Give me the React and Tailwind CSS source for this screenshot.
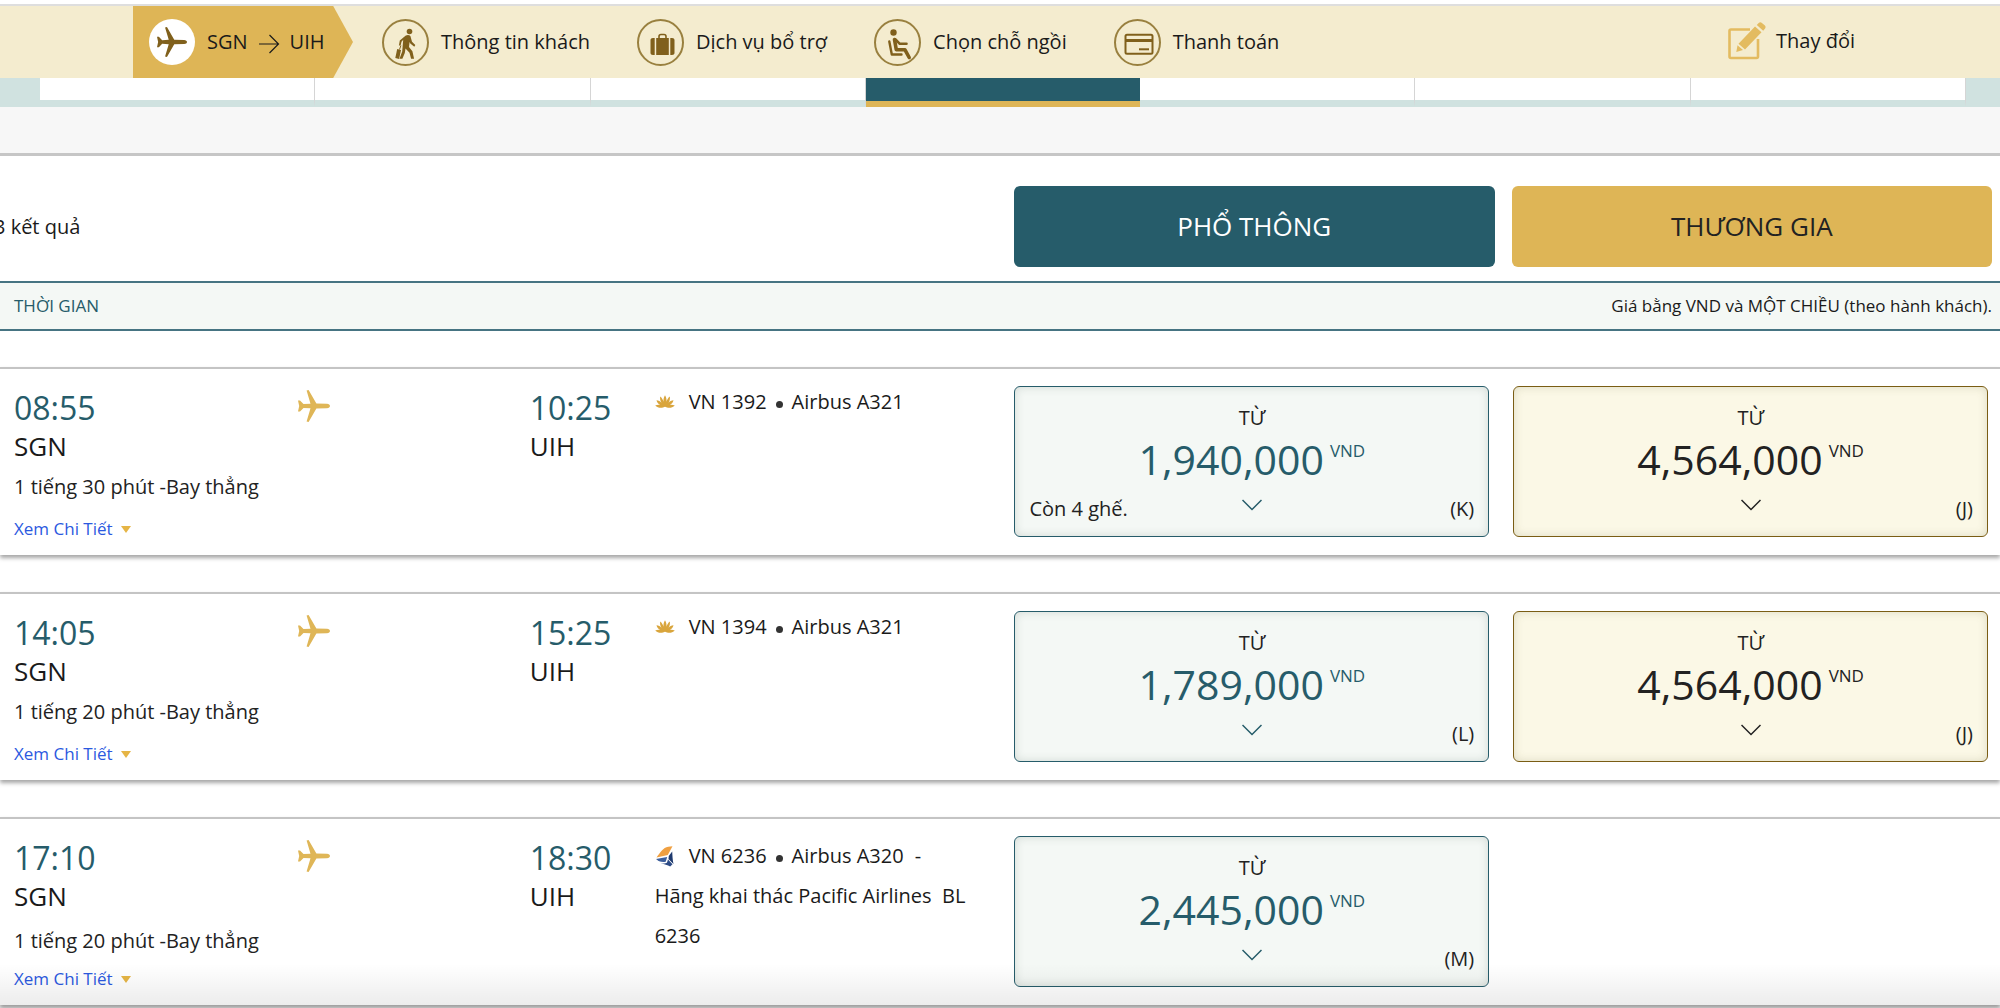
const steps = [
  { icon: WalkerIcon, label: 'Thông tin khách' },
  { icon: LuggageIcon, label: 'Dịch vụ bổ trợ' },
  { icon: SeatIcon, label: 'Chọn chỗ ngồi' },
  { icon: CardIcon, label: 'Thanh toán' },
];

const days = [0, 1, 2, 3, 4, 5, 6];
const activeDay = 3;

const flights = [
  {
    depart: '08:55',
    arrive: '10:25',
    duration: '1 tiếng 30 phút -Bay thẳng',
    number: 'VN 1392',
    aircraft: 'Airbus A321',
    economy: { price: '1,940,000', code: '(K)', seats: 'Còn 4 ghế.' },
    business: { price: '4,564,000', code: '(J)' },
  },
  {
    depart: '14:05',
    arrive: '15:25',
    duration: '1 tiếng 20 phút -Bay thẳng',
    number: 'VN 1394',
    aircraft: 'Airbus A321',
    economy: { price: '1,789,000', code: '(L)' },
    business: { price: '4,564,000', code: '(J)' },
  },
  {
    depart: '17:10',
    arrive: '18:30',
    duration: '1 tiếng 20 phút -Bay thẳng',
    number: 'VN 6236',
    aircraft: 'Airbus A320',
    operator: 'Hãng khai thác Pacific Airlines\u00a0 BL 6236',
    economy: { price: '2,445,000', code: '(M)' },
  },
];

function PlaneIcon({ className }) {
  return (
    <svg viewBox="0 0 32 32" className={className} fill="currentColor" aria-hidden="true">
      <path d="M0 10.5h2l3.5 3.6 7 -.4L8.6 0.6 10.6 0l7.8 13.6 10.6.2c1.8.1 3 1.1 3 2.2s-1.2 2.1-3 2.2l-10.6.2L10.6 32l-2-.6 3.9-13.1-7-.4L2 21.5H0L1.2 16z" />
    </svg>
  );
}

function WalkerIcon({ className }) {
  return (
    <svg viewBox="0 0 46 46" className={className} fill="none" stroke="currentColor" aria-hidden="true">
      <circle cx="25.5" cy="10.5" r="2.8" fill="currentColor" stroke="none" />
      <path d="M21.8 14.5c1.5-.9 3.6-.7 4.6.4l1.600 5.800 3.300 3.400-1 1.600-4-3.100-.7-1.500-.6 5 3.400 4.200 1.700 7.500h-3l-1.600-6-4-4.200-.7 4.500-2.400 5.700h-2.900l2.700-7.200 1-11.900-1.700 2.100-.9 3.800h-1.700l.9-5.100z" fill="currentColor" stroke="none" />
      <path d="M13.200 28l3.800 1-1.900 9-3.800-.9z" fill="currentColor" stroke="none" />
      <path d="M15.500 28.500l1.400-4" strokeWidth="1" />
    </svg>
  );
}

function LuggageIcon({ className }) {
  return (
    <svg viewBox="0 0 46 46" className={className} fill="currentColor" aria-hidden="true">
      <path d="M17.2 17h12.600v17H17.200zM15.700 17v17h-1.700c-1.500 0-2.500-.8-2.500-2V19c0-1.200 1-2 2.500-2zM31.300 17v17h1.700c1.500 0 2.500-.8 2.500-2V19c0-1.200-1-2-2.500-2z" />
      <path d="M20 17v-1.500c0-1.200.8-2 2-2h3c1.200 0 2 .8 2 2V17" fill="none" stroke="currentColor" strokeWidth="1.600" />
    </svg>
  );
}

function SeatIcon({ className }) {
  return (
    <svg viewBox="0 0 46 46" className={className} fill="none" stroke="currentColor" strokeLinecap="round" strokeLinejoin="round" aria-hidden="true">
      <circle cx="17.500" cy="11.500" r="3.200" fill="currentColor" stroke="none" />
      <path d="M13.300 20.500l2.500 13h9.700" strokeWidth="2.400" />
      <path d="M18.500 18.500l1.800 10.300h8.700l4.200 7.700" strokeWidth="3.600" />
      <path d="M19.500 18.500l4.300 4.300h6.700" strokeWidth="2.600" />
    </svg>
  );
}

function CardIcon({ className }) {
  return (
    <svg viewBox="0 0 46 46" className={className} fill="none" stroke="currentColor" aria-hidden="true">
      <rect x="9.500" y="13.800" width="27" height="19" rx="1.500" strokeWidth="2" />
      <path d="M9.500 19.500h27" strokeWidth="3" />
      <path d="M23 28.300h10" strokeWidth="2" />
    </svg>
  );
}

function EditIcon({ className }) {
  return (
    <svg viewBox="0 0 38 38" className={className} aria-hidden="true">
      <path d="M22 7.500H3A1.500 1.500 0 0 0 1.500 9v25.500A1.500 1.500 0 0 0 3 36h25.500a1.500 1.500 0 0 0 1.500-1.500V17" fill="none" stroke="currentColor" strokeWidth="2.600" />
      <path d="M27 4.500l6.500 5.800L17 27.500l-6.500-5.800zM9.500 23.200l5.500 4.900-6.700 1.800zM28.800 3l1.900-2c.9-1 2.300-1 3.200-.1l3 2.600c.9.9.9 2.300 0 3.200L35.200 8.800z" fill="currentColor" />
    </svg>
  );
}

function ArrowIcon() {
  return (
    <svg viewBox="0 0 22 20" className="h-5 w-[22px]" fill="none" stroke="currentColor" strokeWidth="1.200" aria-hidden="true">
      <path d="M1 10h19M11.500 1l9 9-9 9" />
    </svg>
  );
}

function LotusLogo() {
  return (
    <svg viewBox="0 0 20 14" className="h-[14px] w-5" fill="#d9a53c" aria-hidden="true">
      <path d="M10 .2c1.200 1.800 1.700 4 1.500 6.600.5-2 1.600-3.800 3.300-5.200.4 2.200 0 4.200-1.300 6.200 1.300-1.400 2.900-2.200 5-2.500-.5 2-1.700 3.500-3.600 4.500 1.600-.3 3.200-.1 4.900.7-2.200 1.900-4.900 2.900-7.800 2L10 11.700l-2 .8c-2.900.9-5.600-.1-7.800-2 1.700-.8 3.300-1 4.900-.7-1.900-1-3.100-2.500-3.600-4.500 2.100.3 3.700 1.100 5 2.500C5.200 5.800 4.800 3.800 5.200 1.600c1.700 1.400 2.800 3.200 3.300 5.200C8.300 4.200 8.800 2 10 .2z" />
    </svg>
  );
}

function PacificLogo() {
  return (
    <svg viewBox="0 0 20 22" className="h-[22px] w-5" aria-hidden="true">
      <path d="M17.500 1.200L12.800 10 1.500 12.400C5.500 7.500 8 2.500 13.200 1.700z" fill="#f0a041" />
      <path d="M1 14l11.200-2-1.500 4.800C6.500 17.500 3.500 16.500 1 14z" fill="#3d5f9c" />
      <path d="M13.800 11L17.200 6.500c.2 4 .4 8.500 1.300 12.500l-5-5z" fill="#1f3a6e" />
      <path d="M13 14.500l4.500 4.700-2.300 2.200C12.500 20 9.500 19.500 6 18.300c3 .3 5.200-.1 6-.9z" fill="#2d4b86" />
    </svg>
  );
}

function FareButton({ fare, cabin }) {
  const economy = cabin === 'economy';
  return (
    <button
      type="button"
      className={`relative flex h-[151px] w-full flex-col items-center rounded-md border pt-[17px] text-[#222] ${
        economy
          ? 'border-[#265c6a] bg-[#f4f8f5] shadow-[inset_0_0_10px_rgba(40,60,50,0.16)]'
          : 'border-[#7a5d14] bg-[#fbf8e6] shadow-[inset_0_0_10px_rgba(90,90,40,0.18)]'
      }`}
    >
      <span className="text-xl leading-7">TỪ</span>
      <span className={`flex items-start gap-[6px] ${economy ? 'text-[#265c6a]' : 'text-[#222]'}`}>
        <span className="text-[41px] leading-[54px] font-medium">{fare.price}</span>
        <span className="mt-[7px] text-[17px] leading-6">VND</span>
      </span>
      <svg
        viewBox="0 0 20 12"
        className={`mt-[13px] h-3 w-5 ${economy ? 'text-[#265c6a]' : 'text-[#222]'}`}
        fill="none"
        stroke="currentColor"
        strokeWidth="1.500"
        aria-hidden="true"
      >
        <path d="M.5 1L10 10.500 19.500 1" />
      </svg>
      {fare.seats && <span className="absolute bottom-[13px] left-[14px] text-xl leading-7">{fare.seats}</span>}
      <span className="absolute right-[14px] bottom-[13px] text-xl leading-7">{fare.code}</span>
    </button>
  );
}

function FlightCard({ flight }) {
  const wide = Boolean(flight.operator);
  return (
    <article className="grid h-[188px] grid-cols-[991fr_475fr_475fr] gap-x-6 border-t-2 border-[#c4c4c4] bg-white pt-[17px] pr-3 shadow-[0_3px_4px_rgba(0,0,0,0.35)]">
      <div className="-mr-6 grid grid-cols-[516fr_125fr_360fr] pl-[14px]">
        <div className="flex flex-col">
          <div className="flex">
            <div className="w-[55%]">
              <div className="text-[32px] leading-[44px] text-[#265c6a]">{flight.depart}</div>
              <div className="text-[26px] leading-8 text-[#1a1a1a]">SGN</div>
            </div>
            <PlaneIcon className="mt-1 h-8 w-8 text-[#dfb657]" />
          </div>
          <div className={`text-xl leading-7 text-[#222] ${wide ? 'mt-[15px]' : 'mt-[11px]'}`}>{flight.duration}</div>
          <a href="#details" className={`flex items-center gap-2 text-[17px] leading-6 text-[#2b59e0] ${wide ? 'mt-3' : 'mt-4'}`}>
            Xem Chi Tiết
            <span className="border-x-[5px] border-t-[7px] border-x-transparent border-t-[#e6b545]" />
          </a>
        </div>
        <div>
          <div className="text-[32px] leading-[44px] text-[#265c6a]">{flight.arrive}</div>
          <div className="text-[26px] leading-8 text-[#1a1a1a]">UIH</div>
        </div>
        <div className={`pr-8 text-xl text-[#1a1a1a] ${wide ? 'leading-10' : 'leading-8'}`}>
          <div className="flex items-center">
            {wide ? <PacificLogo /> : <LotusLogo />}
            <span className="ml-[14px]">{flight.number}</span>
            <span className="mx-[9px] mt-1 h-[7px] w-[7px] rounded-full bg-[#333]" />
            <span>{flight.aircraft}</span>
            {wide && <span className="ml-[11px]">-</span>}
          </div>
          {wide && <div>{flight.operator}</div>}
        </div>
      </div>
      <FareButton fare={flight.economy} cabin="economy" />
      {flight.business && <FareButton fare={flight.business} cabin="business" />}
    </article>
  );
}

export default function App() {
  return (
    <div className="relative h-screen overflow-hidden bg-white font-['Open_Sans','Noto_Sans',sans-serif] text-[#1a1a1a]">
      <header className="mt-1 flex h-[74px] border-t-2 border-[#dedede] bg-[#f4eccf] pl-[133px] text-xl">
        <a href="#flight" className="flex w-[220px] items-center bg-[#deb556] pl-4 [clip-path:polygon(0_0,91%_0,100%_50%,91%_100%,0_100%)]">
          <span className="mr-3 grid h-[46px] w-[46px] place-items-center rounded-full bg-white text-[#80601c]">
            <PlaneIcon className="h-[30px] w-[30px]" />
          </span>
          <span>SGN</span>
          <span className="mx-[10px] mt-1"><ArrowIcon /></span>
          <span>UIH</span>
        </a>
        <nav className="ml-[29px] flex items-center gap-[47px]">
          {steps.map(({ icon: Icon, label }) => (
            <a key={label} href="#step" className="flex items-center gap-3">
              <span className="grid h-[47px] w-[47px] place-items-center rounded-full border-2 border-[#99803f] text-[#80601c]">
                <Icon className="h-[46px] w-[46px] shrink-0" />
              </span>
              {label}
            </a>
          ))}
        </nav>
        <button type="button" className="mr-[145px] ml-auto flex items-center gap-[10px] pb-[3px]">
          <EditIcon className="h-[38px] w-[38px] text-[#e3bb60]" />
          Thay đổi
        </button>
      </header>

      <div className="flex h-[29px] bg-[#d0e2e0] pr-[34px] pl-10">
        {days.map((day) => (
          <div
            key={day}
            className={
              day === activeDay
                ? 'flex-1 border-b-[6px] border-[#deb556] bg-[#265c6a]'
                : 'flex-1 border-r border-b-[7px] border-r-[#d5d5d5] border-b-[#d0e2e0] bg-white'
            }
          />
        ))}
      </div>
      <div className="h-[49px] border-b-[3px] border-[#c6c6c6] bg-[#f7f7f7]" />

      <section className="flex h-[125px] items-center pt-4">
        <p className="-ml-[6px] w-[51%] shrink-0 text-xl">3 kết quả</p>
        <div className="grid flex-1 grid-cols-2 gap-[17px] pr-2 text-[26px]">
          <button type="button" className="h-[81px] rounded-md bg-[#265c6a] font-medium text-white">PHỔ THÔNG</button>
          <button type="button" className="h-[81px] rounded-md bg-[#deb556] font-medium text-[#222]">THƯƠNG GIA</button>
        </div>
      </section>

      <div className="flex h-[50px] items-center justify-between border-y-2 border-[#467482] bg-[#f4f8f5] pr-2 pl-[14px] text-[17px]">
        <span className="text-[#265c6a]">THỜI GIAN</span>
        <span>Giá bằng VND và MỘT CHIỀU (theo hành khách).</span>
      </div>

      <main className="flex flex-col gap-[37px] pt-9">
        {flights.map((flight) => (
          <FlightCard key={flight.number} flight={flight} />
        ))}
      </main>

      {/* fade along the bottom edge of the window */}
      <div className="pointer-events-none absolute inset-x-0 bottom-0 h-11 bg-linear-to-b from-transparent to-black/8" />
    </div>
  );
}
